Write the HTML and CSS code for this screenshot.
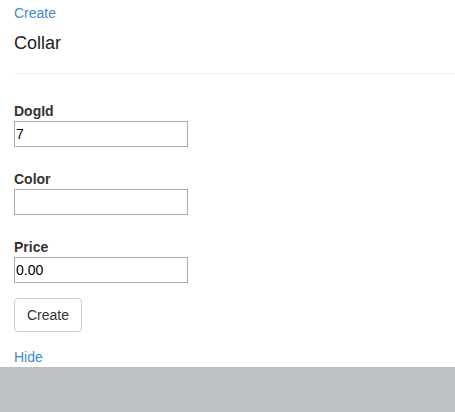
FILE: index.html
```html
<!DOCTYPE html>
<html>
<head>
<meta charset="utf-8">
<link rel="stylesheet" href="styles.css">
</head>
<body>
<div class="page">
  <a class="link top-link" href="#">Create</a>
  <h4 class="title">Collar</h4>
  <hr class="rule">
  <form class="form">
    <div class="field">
      <label class="label">DogId</label>
      <input class="input" type="text" value="7">
    </div>
    <div class="field">
      <label class="label">Color</label>
      <input class="input" type="text" value="">
    </div>
    <div class="field last">
      <label class="label">Price</label>
      <input class="input" type="text" value="0.00">
    </div>
    <button class="btn" type="button">Create</button>
  </form>
  <a class="link hide-link" href="#">Hide</a>
</div>
</body>
</html>
```

FILE: styles.css
```css
html, body {
  margin: 0;
  padding: 0;
}
body {
  background: #bdc1c4;
  font-family: "Liberation Sans", Arial, sans-serif;
  font-size: 14px;
  line-height: 20px;
  color: #333;
  overflow: hidden;
}
.page {
  background: #fff;
  padding: 3px 0 0 14px;
}
.link {
  display: block;
  color: #428bca;
  text-decoration: none;
}
.top-link {
  line-height: 20px;
}
.title {
  margin: 10px 0 0;
  font-size: 18px;
  font-weight: 500;
  line-height: 20px;
  color: #222;
}
.rule {
  margin: 20px 0 27px;
  border: 0;
  border-top: 1px solid #eee;
  height: 0;
}
.form {
  margin: 0;
}
.field {
  margin-bottom: 22px;
}
.field.last {
  margin-bottom: 15px;
}
.label {
  display: block;
  font-weight: bold;
  line-height: 20px;
}
.input {
  display: block;
  box-sizing: border-box;
  width: 174px;
  height: 26px;
  margin: 0;
  border: 1px solid #a9a9a9;
  border-radius: 0;
  padding: 1px 1px;
  font-family: "Liberation Sans", Arial, sans-serif;
  font-size: 14px;
  color: #000;
  background: #fff;
  outline: none;
}
.btn {
  display: block;
  box-sizing: border-box;
  height: 34px;
  margin: 0;
  padding: 6px 12px;
  border: 1px solid #ccc;
  border-radius: 4px;
  background: #fff;
  color: #333;
  font-family: "Liberation Sans", Arial, sans-serif;
  font-size: 14px;
  line-height: 20px;
}
.hide-link {
  margin-top: 16px;
  line-height: 19px;
}
```
